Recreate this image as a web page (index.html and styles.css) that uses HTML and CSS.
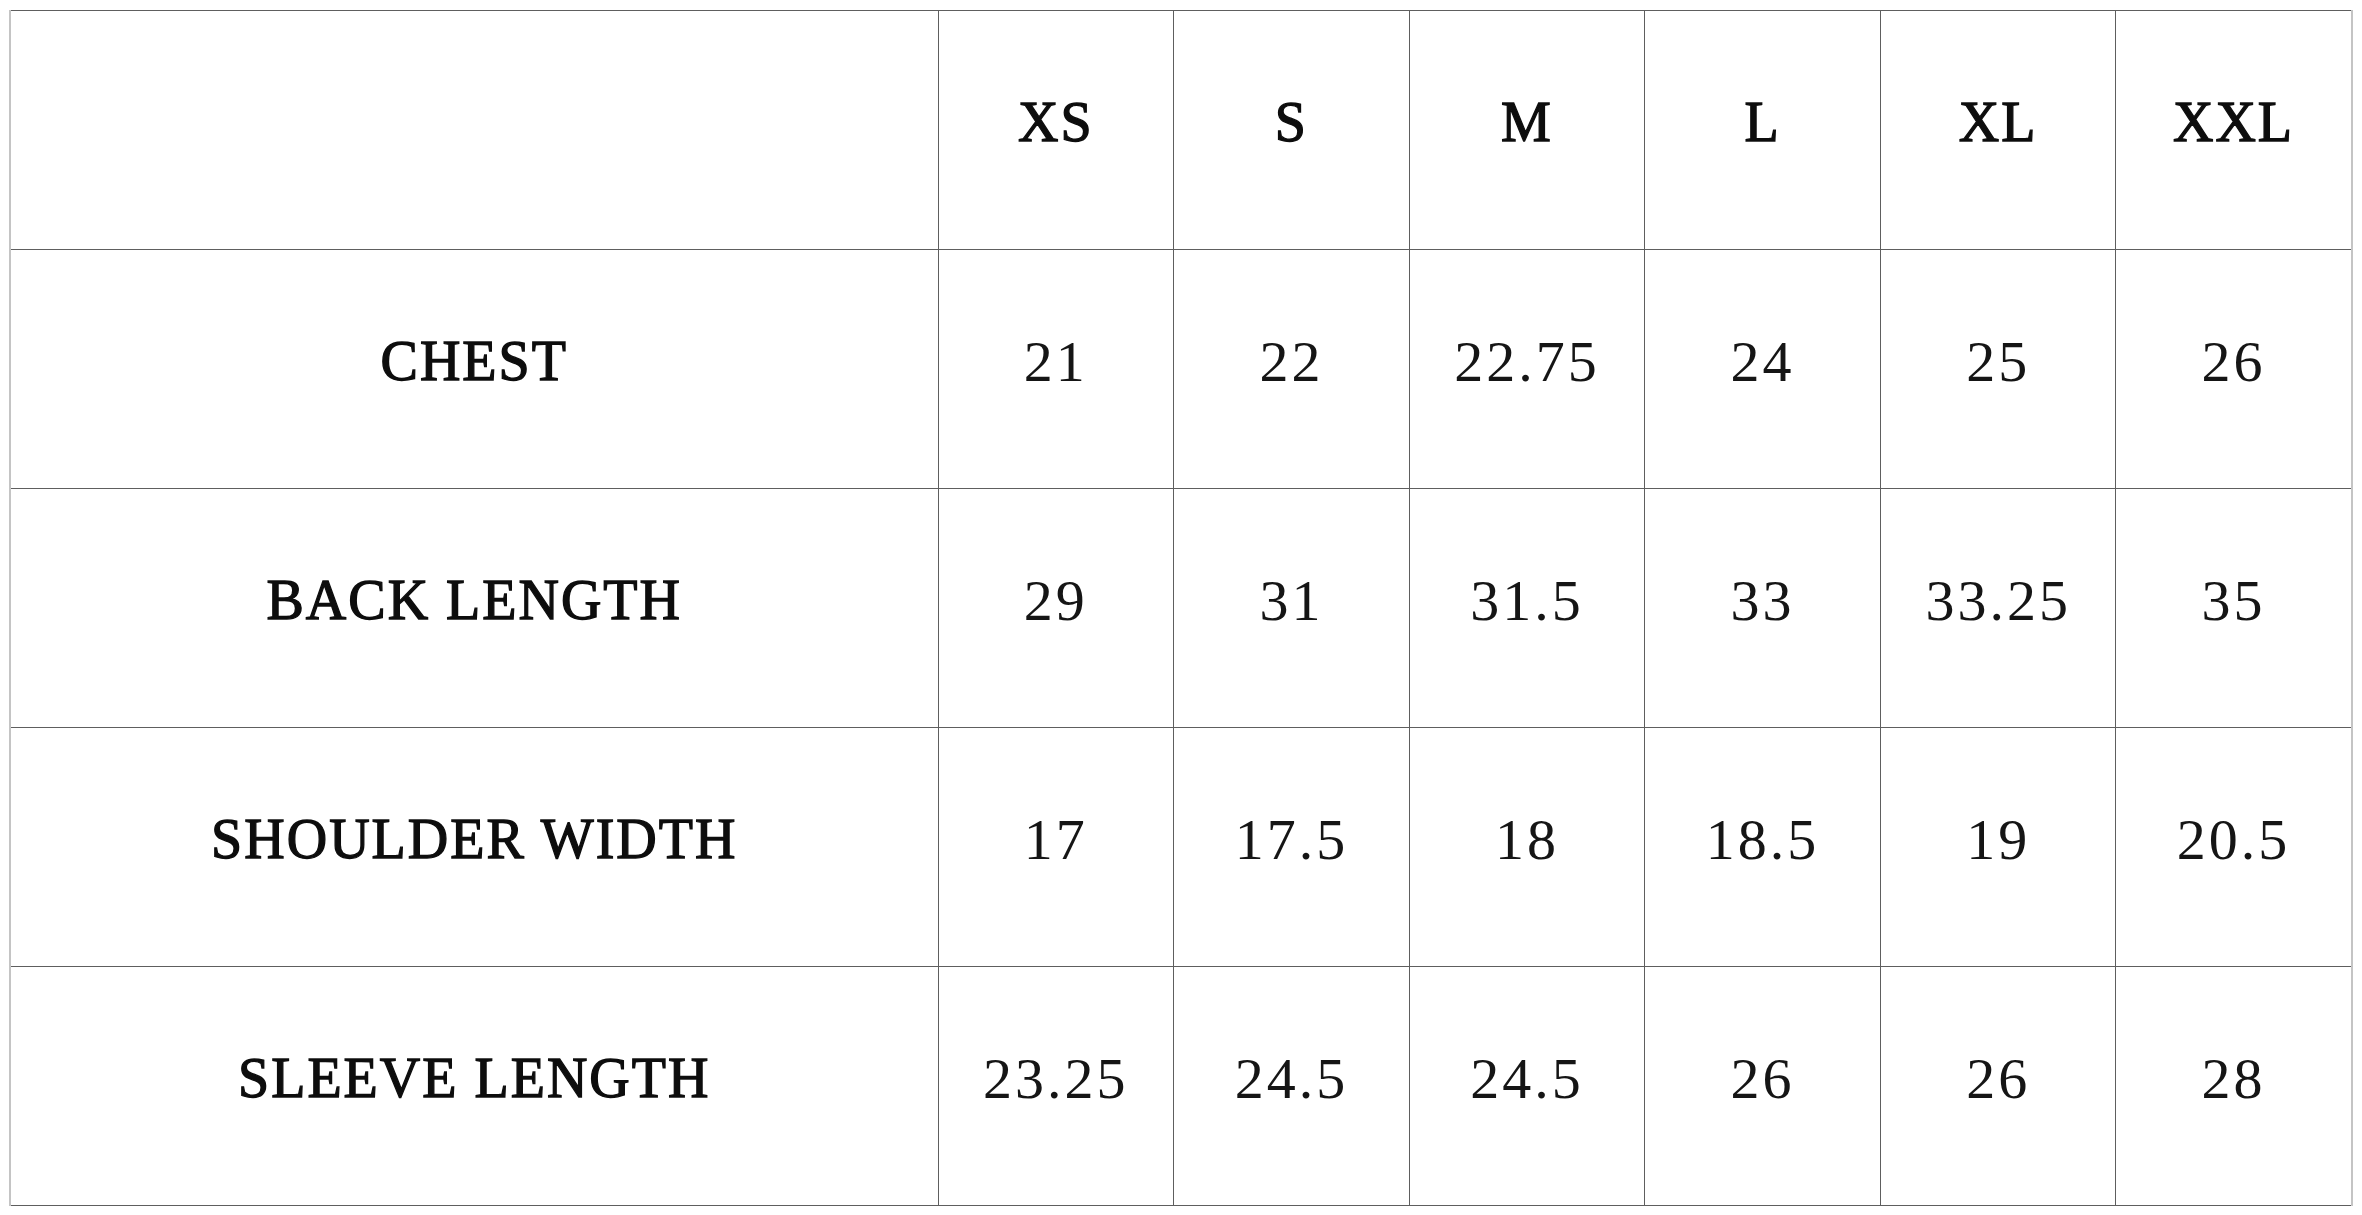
FILE: index.html
```html
<!DOCTYPE html>
<html lang="en">
<head>
<meta charset="utf-8">
<title>Size Chart</title>
<link rel="stylesheet" href="styles.css">
</head>
<body>
<table class="size-chart">
  <colgroup>
    <col class="col-label">
    <col class="col-size"><col class="col-size"><col class="col-size">
    <col class="col-size"><col class="col-size"><col class="col-size">
  </colgroup>
  <thead>
    <tr>
      <th class="corner"></th>
      <th class="size">XS</th>
      <th class="size">S</th>
      <th class="size">M</th>
      <th class="size">L</th>
      <th class="size">XL</th>
      <th class="size">XXL</th>
    </tr>
  </thead>
  <tbody>
    <tr>
      <th class="label">CHEST</th>
      <td>21</td><td>22</td><td>22.75</td><td>24</td><td>25</td><td>26</td>
    </tr>
    <tr>
      <th class="label">BACK LENGTH</th>
      <td>29</td><td>31</td><td>31.5</td><td>33</td><td>33.25</td><td>35</td>
    </tr>
    <tr>
      <th class="label">SHOULDER WIDTH</th>
      <td>17</td><td>17.5</td><td>18</td><td>18.5</td><td>19</td><td>20.5</td>
    </tr>
    <tr>
      <th class="label">SLEEVE LENGTH</th>
      <td>23.25</td><td>24.5</td><td>24.5</td><td>26</td><td>26</td><td>28</td>
    </tr>
  </tbody>
</table>
</body>
</html>
```
FILE: styles.css
```css
html, body {
  margin: 0;
  padding: 0;
  background: #ffffff;
}

body {
  padding: 10px 0 0 9px;
  font-family: "Liberation Serif", "Times New Roman", serif;
  color: #0d0d0d;
}

.size-chart {
  border-collapse: collapse;
  table-layout: fixed;
  width: 2342px;
}

.col-label { width: 928px; }
.col-size { width: 235.6px; }

.size-chart th,
.size-chart td {
  height: 239px;
  padding: 0 0 16px 0;
  box-sizing: border-box;
  text-align: center;
  vertical-align: middle;
  border: 1px solid #5e5e5e;
}

.size-chart tr > :first-child { border-left: 2px solid #c4c4c4; }
.size-chart tr > :last-child { border-right: 2px solid #c4c4c4; }

.size-chart th {
  font-weight: normal;
  font-size: 56px;
  letter-spacing: 2px;
  -webkit-text-stroke: 1.3px #0d0d0d;
}

.size-chart td {
  font-size: 58px;
  letter-spacing: 3px;
  font-weight: normal;
  color: #151515;
}
```
